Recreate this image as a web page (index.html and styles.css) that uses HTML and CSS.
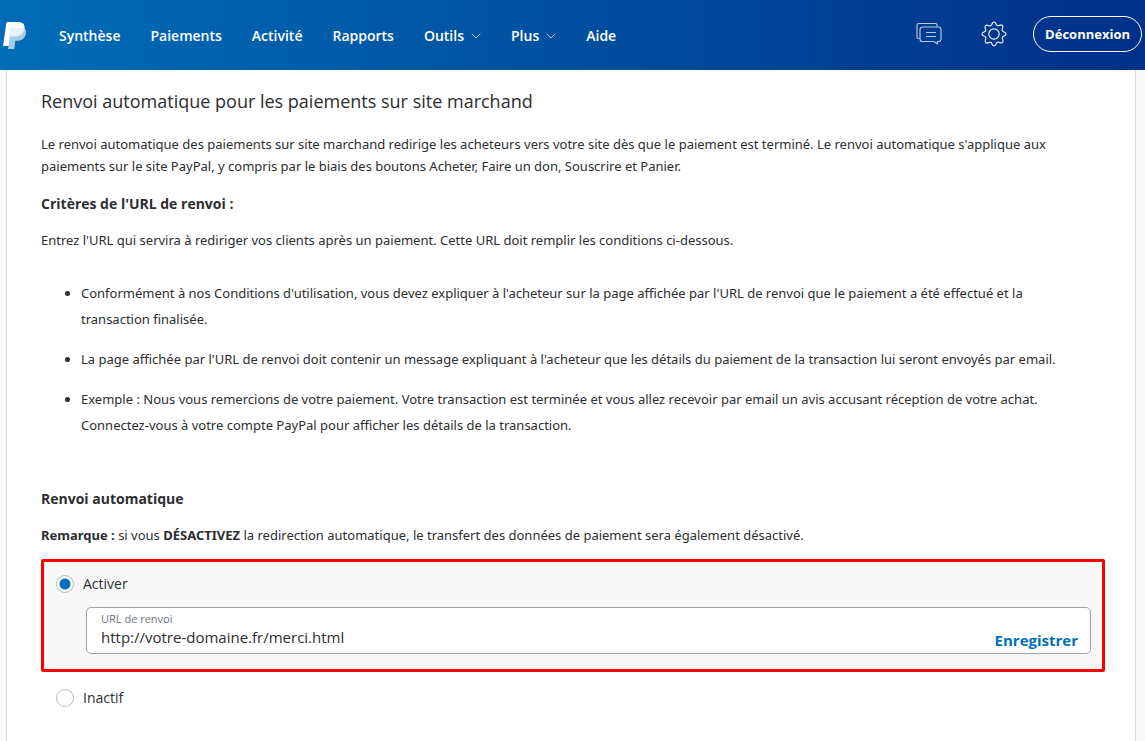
FILE: index.html
```html
<!DOCTYPE html>
<html lang="fr">
<head>
    <meta charset="UTF-8">
    <meta name="viewport" content="width=device-width, initial-scale=1.0">
    <title>Préférences de site marchand - PayPal</title>
    <link rel="stylesheet" href="styles.css">
</head>
<body>
    <header class="topbar">
        <a class="logo" href="#" aria-label="PayPal">
            <svg width="24" height="28" viewBox="0 0 24 28">
                <path fill="#fff" d="M4.500 0H15c4.500 0 7 2.300 6.500 6-.7 5.500-4.300 8.500-9.500 8.500H9L7.500 24H0L3.300 1.200C3.400.4 3.800 0 4.500 0z"/>
                <path fill="#a6cbe6" d="M21.300 6c1.600 1.300 2.100 3 1.700 5.200-.8 5-4 7.600-9 7.600h-1.700L11.300 27H5l2.900-19c.2-1.300.8-2 2-2z"/>
                <path fill="#e6f1f9" d="M9.800 6h11.500l.2.300c-.8 5.300-4.300 8.200-9.500 8.200H6.900L7.900 8c.2-1.300.8-2 1.900-2z"/>
            </svg>
        </a>
        <nav class="menu">
            <a href="#">Synthèse</a>
            <a href="#">Paiements</a>
            <a href="#">Activité</a>
            <a href="#">Rapports</a>
            <a href="#">Outils
                <svg class="chevron" width="10" height="6" viewBox="0 0 10 6"><path d="M.7.7 5 5 9.300.7"/></svg>
            </a>
            <a href="#">Plus
                <svg class="chevron" width="10" height="6" viewBox="0 0 10 6"><path d="M.7.7 5 5 9.300.7"/></svg>
            </a>
            <a href="#">Aide</a>
        </nav>
        <div class="tools">
            <a href="#" aria-label="Messages">
                <svg class="icon" width="26" height="26" viewBox="0 0 26 26">
                    <path d="M3.500 17.500h-1a1.500 1.500 0 0 1-1.500-1.500V4A1.500 1.500 0 0 1 2.500 2.500h17A1.500 1.500 0 0 1 21 4v1.500"/>
                    <path d="M6.500 6h16A2.500 2.500 0 0 1 25 8.500V18a2.500 2.500 0 0 1-2.500 2.500H21.500V23l-3.500-2.500H6.500A2.500 2.500 0 0 1 4 18V8.500A2.500 2.500 0 0 1 6.500 6z"/>
                    <path d="M10 11.500h10M10 15.500h10"/>
                </svg>
            </a>
            <a href="#" aria-label="Paramètres">
                <svg class="icon gear" width="26" height="26" viewBox="0 0 26 26">
                    <path d="M10.800 3.500C11.300 2.200 11.500 1 13 1s1.700 1.200 2.200 2.500c.4 1 1.700 1.500 2.700 1.100 1.300-.6 2.300-1.300 3.500-.1s.5 2.200-.1 3.500c-.4 1 .1 2.300 1.100 2.700C23.800 11.300 25 11.500 25 13s-1.200 1.700-2.500 2.200c-1 .4-1.500 1.700-1.100 2.700.6 1.300 1.300 2.300.1 3.500s-2.200.5-3.500-.1c-1-.4-2.300.1-2.700 1.100C14.700 23.800 14.500 25 13 25s-1.700-1.200-2.200-2.500c-.4-1-1.700-1.500-2.700-1.100-1.300.6-2.300 1.300-3.500.1s-.5-2.200.1-3.500c.4-1-.1-2.300-1.100-2.700C2.200 14.700 1 14.500 1 13s1.200-1.700 2.500-2.200c1-.4 1.500-1.700 1.100-2.700-.6-1.300-1.300-2.300-.1-3.500s2.200-.5 3.500.1c1 .4 2.300-.1 2.800-1.200z"/>
                    <circle cx="13" cy="13" r="5.200"/>
                </svg>
            </a>
            <button class="logout" type="button">Déconnexion</button>
        </div>
    </header>

    <main class="panel">
        <h1>Renvoi automatique pour les paiements sur site marchand</h1>
        <p>Le renvoi automatique des paiements sur site marchand redirige les acheteurs vers votre site dès que le paiement est terminé. Le renvoi automatique s'applique aux paiements sur le site PayPal, y compris par le biais des boutons Acheter, Faire un don, Souscrire et Panier.</p>
        <h2>Critères de l'URL de renvoi :</h2>
        <p>Entrez l'URL qui servira à rediriger vos clients après un paiement. Cette URL doit remplir les conditions ci-dessous.</p>
        <ul class="criteria">
            <li>Conformément à nos Conditions d'utilisation, vous devez expliquer à l'acheteur sur la page affichée par l'URL de renvoi que le paiement a été effectué et la transaction finalisée.</li>
            <li>La page affichée par l'URL de renvoi doit contenir un message expliquant à l'acheteur que les détails du paiement de la transaction lui seront envoyés par email.</li>
            <li>Exemple : Nous vous remercions de votre paiement. Votre transaction est terminée et vous allez recevoir par email un avis accusant réception de votre achat. Connectez-vous à votre compte PayPal pour afficher les détails de la transaction.</li>
        </ul>
        <h2>Renvoi automatique</h2>
        <p><strong>Remarque :</strong> si vous <strong>DÉSACTIVEZ</strong> la redirection automatique, le transfert des données de paiement sera également désactivé.</p>

        <form class="return-form">
            <div class="option active">
                <div class="choice">
                    <input type="radio" id="on" name="autoReturn" checked>
                    <label for="on">Activer</label>
                </div>
                <div class="field">
                    <div class="field-text">
                        <label for="returnUrl">URL de renvoi</label>
                        <input type="text" id="returnUrl" name="returnUrl" value="http://votre-domaine.fr/merci.html">
                    </div>
                    <button class="save" type="button">Enregistrer</button>
                </div>
            </div>
            <div class="option">
                <div class="choice">
                    <input type="radio" id="off" name="autoReturn">
                    <label for="off">Inactif</label>
                </div>
            </div>
        </form>
    </main>
</body>
</html>
```
FILE: styles.css
```css
* {
    box-sizing: border-box;
}
body {
    margin: 0;
    min-height: 100vh;
    display: flex;
    flex-direction: column;
    background-color: #fafafa;
    color: #2c2e2f;
    font-family: "Open Sans", sans-serif;
    font-size: 14px;
    line-height: 22px;
}
input, button {
    font-family: inherit;
}

/* top bar */
.topbar {
    display: flex;
    align-items: center;
    height: 70px;
    padding: 0 3px;
    background: linear-gradient(to right, #006db8, #003087);
}
.topbar a {
    color: #fff;
    text-decoration: none;
}
.topbar svg {
    display: block;
}
.logo {
    padding-top: 2px;
}
.menu {
    display: flex;
    gap: 30px;
    margin-left: 32px;
    padding-top: 2px;
    font-size: 14px;
    font-weight: 600;
}
.menu a {
    display: flex;
    align-items: center;
    gap: 7px;
}
.chevron {
    fill: none;
    stroke: #a9c4e4;
    stroke-width: 1;
}
.tools {
    display: flex;
    align-items: center;
    gap: 39px;
    margin-left: auto;
    padding-bottom: 2px;
}
.icon {
    fill: none;
    stroke: #b4c7e3;
    stroke-width: 1.2;
    stroke-linejoin: round;
}
.gear {
    stroke: #e6edf7;
}
.logout {
    height: 36px;
    margin-left: -13px;
    padding: 0 11px;
    border: 1px solid #fff;
    border-radius: 18px;
    background: none;
    color: #fff;
    font-size: 13px;
    font-weight: 700;
}

/* content */
.panel {
    flex: 1;
    margin: 0 9px 0 6px;
    padding: 17px 30px 20px 34px;
    background-color: #fff;
    border: 1px solid #dcdcdc;
    border-width: 0 1px;
}
.panel h1 {
    margin: 0 0 18px;
    font-size: 18px;
    font-weight: 400;
    line-height: 28px;
}
.panel h2 {
    margin: 0 0 14px;
    font-size: 14px;
    font-weight: 700;
}
.panel p {
    margin: 0 0 16px;
}
.panel p, .criteria {
    font-family: "Noto Sans", sans-serif;
    font-size: 13px;
}
.criteria {
    margin: 29px 0 50px;
    padding: 0 20px 0 40px;
    line-height: 26px;
}
.criteria li {
    margin-bottom: 14px;
}

/* options */
.return-form {
    margin-top: -3px;
}
.option {
    padding: 15px;
}
.option.active {
    padding: 11px 11px 15px 12px;
    border: 3px solid #f00;
    border-radius: 2px;
    background-color: #f7f7f7;
}
.choice {
    display: flex;
    align-items: center;
    gap: 9px;
}
.choice input {
    appearance: none;
    width: 18px;
    height: 18px;
    margin: 0;
    border: 1px solid #b7bcbf;
    border-radius: 50%;
    background-color: #fff;
}
.choice input:checked {
    background: radial-gradient(circle, #0070ba 5px, #fff 6px);
}
.field {
    display: flex;
    align-items: flex-end;
    height: 47px;
    margin: 12px 0 0 30px;
    padding: 0 12px 0 14px;
    border: 1px solid #9da3a6;
    border-radius: 5px;
    background-color: #fff;
}
.field-text {
    flex: 1;
    align-self: flex-start;
    display: flex;
    flex-direction: column;
    padding-top: 3px;
}
.field-text label {
    color: #6c7378;
    font-size: 11px;
    line-height: 15px;
}
.field-text input {
    width: 100%;
    height: 22px;
    padding: 0;
    border: 0;
    outline: 0;
    color: #2c2e2f;
    font-size: 15px;
}
.save {
    padding: 0;
    border: 0;
    background: none;
    color: #0070ba;
    font-size: 15px;
    font-weight: 700;
    line-height: 26px;
}
```
